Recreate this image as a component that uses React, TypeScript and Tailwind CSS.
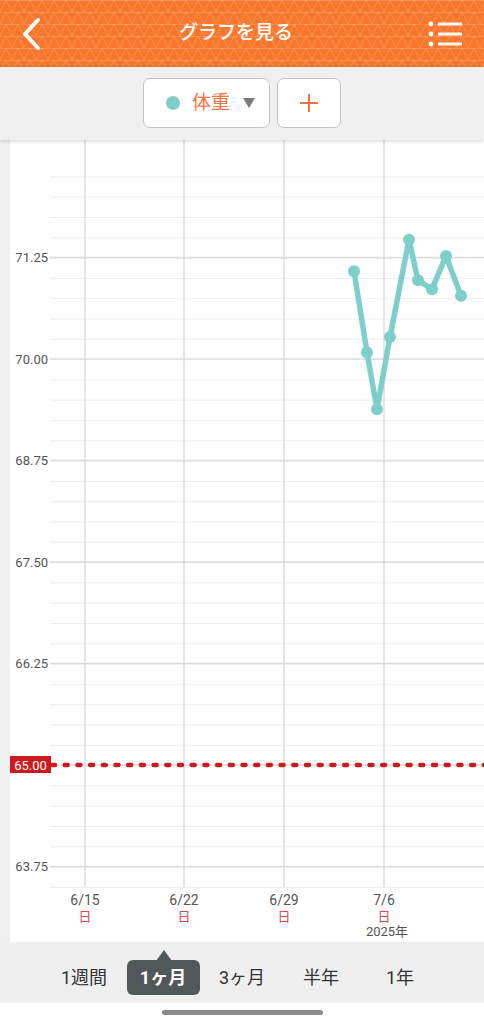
import React from "react";

const font = "Roboto, 'Noto Sans CJK JP', sans-serif";

// weight readings (x on screen, value)
const points: [number, number][] = [
  [354, 71.08],
  [367, 70.08],
  [377, 69.38],
  [390, 70.27],
  [409, 71.47],
  [418, 70.97],
  [432, 70.86],
  [446, 71.27],
  [461, 70.78],
];

const yOf = (v: number) => 765 - (v - 65) * 81.2;

const majors = [71.25, 70.0, 68.75, 67.5, 66.25, 65.0, 63.75];
const minors = Array.from({ length: 36 }, (_, i) => 176.9 + i * 20.3);
const weeks = [
  { x: 85, label: "6/15" },
  { x: 184, label: "6/22" },
  { x: 284, label: "6/29" },
  { x: 384, label: "7/6", year: true },
];

const tabs = ["1週間", "1ヶ月", "3ヶ月", "半年", "1年"];

function Header() {
  return (
    <div className="relative h-[67px] bg-[#f8772c] flex items-center justify-between px-5 overflow-hidden">
      <svg className="absolute inset-0" width="484" height="67">
        <defs>
          <pattern id="tri" width="12" height="12" patternUnits="userSpaceOnUse">
            <path d="M0 12 L6 0 L12 12 M0 0.5 H12" fill="none" stroke="rgba(255,255,255,0.17)" strokeWidth="1" />
          </pattern>
        </defs>
        <rect width="484" height="67" fill="url(#tri)" />
      </svg>
      <svg className="relative" width="24" height="34" viewBox="0 0 24 34">
        <path d="M18 3 L5 17 L18 31" fill="none" stroke="white" strokeWidth="4" strokeLinecap="round" strokeLinejoin="round" />
      </svg>
      <span className="relative text-white text-[19px] font-medium" style={{ fontFamily: font }}>
        グラフを見る
      </span>
      <svg className="relative" width="36" height="28" viewBox="0 0 36 28">
        <circle cx="3" cy="4" r="2.4" fill="white" />
        <circle cx="3" cy="14" r="2.4" fill="white" />
        <circle cx="3" cy="24" r="2.4" fill="white" />
        <rect x="10" y="2.5" width="24" height="3" fill="white" />
        <rect x="10" y="12.5" width="24" height="3" fill="white" />
        <rect x="10" y="22.5" width="24" height="3" fill="white" />
      </svg>
    </div>
  );
}

function Toolbar() {
  return (
    <div className="relative z-10 h-[73px] bg-[#f0f0f0] flex justify-center pt-[11px] gap-[7px] shadow-[0_2px_3px_rgba(0,0,0,0.12)]">
      <button className="w-[127px] h-[50px] bg-white border border-[#c4c4c4] rounded-[7px] flex items-center pl-[22px]">
        <span className="w-[14px] h-[14px] rounded-full bg-[#7ecfcb]" />
        <span className="ml-[12px] text-[19px] text-[#ef7540]" style={{ fontFamily: font }}>
          体重
        </span>
        <svg className="ml-[13px]" width="12" height="10" viewBox="0 0 12 10">
          <path d="M0 0 H12 L6 10 Z" fill="#7a7a7a" />
        </svg>
      </button>
      <button className="w-[64px] h-[50px] bg-white border border-[#c4c4c4] rounded-[7px] flex items-center justify-center">
        <svg width="20" height="20" viewBox="0 0 20 20">
          <path d="M10 1 V19 M1 10 H19" stroke="#ef7540" strokeWidth="2" />
        </svg>
      </button>
    </div>
  );
}

function Chart() {
  const line = points.map(([x, v]) => `${x},${yOf(v)}`).join(" ");
  return (
    <div className="h-[802px] bg-[#f0f0f0] pl-[10px]">
      <svg width="474" height="802" viewBox="10 140 474 802" className="block bg-white" style={{ fontFamily: font }}>
        {minors.map((y) => (
          <line key={y} x1="50" x2="484" y1={y} y2={y} stroke="#ececec" strokeWidth="1" />
        ))}
        {majors.map((v) => (
          <line key={v} x1="50" x2="484" y1={yOf(v)} y2={yOf(v)} stroke="#dcdcdc" strokeWidth="1.3" />
        ))}
        {weeks.map((w) => (
          <line key={w.x} x1={w.x} x2={w.x} y1="140" y2="887" stroke="#d9d9d9" strokeWidth="1.3" />
        ))}
        {majors
          .filter((v) => v !== 65)
          .map((v) => (
            <text key={v} x="48" y={yOf(v) + 4.5} textAnchor="end" fontSize="13" fill="#555">
              {v.toFixed(2)}
            </text>
          ))}
        <line x1="52" x2="484" y1="765" y2="765" stroke="#cc1a1f" strokeWidth="4.5" strokeDasharray="3 9.7" strokeLinecap="round" />
        <rect x="10" y="756" width="41" height="17" fill="#cc1a1f" />
        <text x="30.5" y="769.5" textAnchor="middle" fontSize="13" fill="white">
          65.00
        </text>
        {weeks.map((w) => (
          <g key={w.label}>
            <text x={w.x} y="905" textAnchor="middle" fontSize="14" fill="#555">
              {w.label}
            </text>
            <text x={w.x} y="920.5" textAnchor="middle" fontSize="13" fill="#d64a4f">
              日
            </text>
            {w.year && (
              <text x={w.x + 3} y="936" textAnchor="middle" fontSize="13" fill="#555">
                2025年
              </text>
            )}
          </g>
        ))}
        <polyline points={line} fill="none" stroke="#7ecfcb" strokeWidth="5.5" strokeLinejoin="round" />
        {points.map(([x, v]) => (
          <circle key={x} cx={x} cy={yOf(v)} r="6" fill="#7ecfcb" />
        ))}
      </svg>
    </div>
  );
}

function PeriodTabs() {
  return (
    <div className="h-[61px] bg-[#efefef] flex justify-center items-center" style={{ fontFamily: font }}>
      {tabs.map((t) => {
        const active = t === "1ヶ月";
        return (
          <div key={t} className="w-[79px] flex justify-center">
            {active ? (
              <div className="relative w-[73px] h-[35px] mt-[9px] rounded-[6px] bg-[#52575a] flex items-center justify-center">
                <span className="absolute -top-[10px] left-[29px] w-0 h-0 border-x-[8px] border-x-transparent border-b-[11px] border-b-[#52575a]" />
                <span className="text-white text-[18px] font-bold">{t}</span>
              </div>
            ) : (
              <span className="mt-[9px] text-[18px] text-[#333]">{t}</span>
            )}
          </div>
        );
      })}
    </div>
  );
}

export default function App() {
  return (
    <div className="w-[484px] h-[1024px] bg-white overflow-hidden">
      <Header />
      <Toolbar />
      <Chart />
      <PeriodTabs />
      <div className="h-[21px] bg-white flex justify-center pt-[7px]">
        <div className="w-[161px] h-[5px] rounded-full bg-[#8a8a8a]" />
      </div>
    </div>
  );
}
